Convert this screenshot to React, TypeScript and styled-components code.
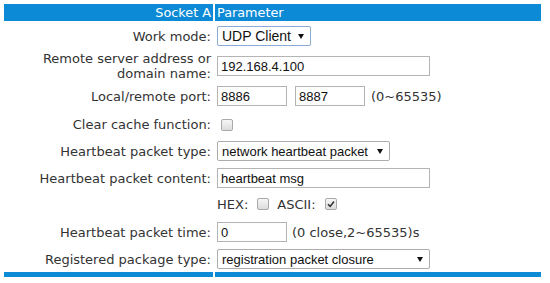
import React from 'react';
import styled, { createGlobalStyle } from 'styled-components';

const GlobalStyle = createGlobalStyle`
  body {
    margin: 0;
    background: #ffffff;
  }
`;

const Table = styled.div`
  margin: 4px 0 0 4px;
  width: 537px;
  display: flex;
  flex-direction: column;
  font-family: 'DejaVu Sans', Verdana, sans-serif;
`;

const Row = styled.div<{ $h: number }>`
  display: grid;
  grid-template-columns: 209px 1fr;
  column-gap: 2px;
  height: ${(p) => p.$h}px;
`;

const HeadCell = styled.div<{ $align: 'left' | 'right' }>`
  background: #0d8ad6;
  color: #ffffff;
  font-size: 12.8px;
  line-height: 17px;
  padding: 0 2px;
  text-align: ${(p) => p.$align};
  white-space: nowrap;
`;

const Bar = styled.div`
  background: #0d8ad6;
`;

const Label = styled.div`
  display: flex;
  align-items: center;
  justify-content: flex-end;
  text-align: right;
  padding-right: 2px;
  color: #333333;
  font-size: 13px;
  line-height: 15px;
  white-space: nowrap;
`;

const Value = styled.div`
  display: flex;
  align-items: center;
  padding-left: 2px;
  color: #333333;
  font-size: 13px;
`;

const TextInput = styled.input<{ $w: number; $left?: number }>`
  box-sizing: border-box;
  width: ${(p) => p.$w}px;
  height: 20px;
  margin: 0 0 0 ${(p) => p.$left ?? 0}px;
  padding: 0 3px;
  border: 1px solid #b4b4b4;
  border-radius: 0;
  font-family: 'Liberation Sans', Arial, sans-serif;
  font-size: 13px;
  color: #111111;
  background: #ffffff;
  outline: none;
`;

const Select = styled.div<{ $w: number; $focus?: boolean; $size?: number }>`
  box-sizing: border-box;
  width: ${(p) => p.$w}px;
  height: 20px;
  display: flex;
  align-items: center;
  justify-content: space-between;
  padding: 0 6px 0 4px;
  border: 1px solid ${(p) => (p.$focus ? '#8aa9d4' : '#acacac')};
  border-radius: 2px;
  background: #ffffff;
  font-family: 'Liberation Sans', Arial, sans-serif;
  font-size: ${(p) => p.$size ?? 13}px;
  color: #111111;
  white-space: nowrap;
`;

const Arrow = () => (
  <svg width="6" height="5" viewBox="0 0 6 5">
    <polygon points="0,0 6,0 3,5" fill="#111111" />
  </svg>
);

const Check = styled.span<{ $left?: number }>`
  box-sizing: border-box;
  width: 12px;
  height: 12px;
  margin-left: ${(p) => p.$left ?? 0}px;
  border: 1px solid #a9a9a9;
  border-radius: 2px;
  background: linear-gradient(#f6f6f6, #dcdcdc);
  display: inline-flex;
  align-items: center;
  justify-content: center;
`;

const Note = styled.span<{ $left?: number }>`
  margin-left: ${(p) => p.$left ?? 0}px;
  font-family: 'DejaVu Sans', Verdana, sans-serif;
  font-size: 13px;
  color: #333333;
  white-space: nowrap;
`;

const App: React.FC = () => {
  return (
    <>
      <GlobalStyle />
      <Table>
        <Row $h={17}>
          <HeadCell $align="right">Socket A</HeadCell>
          <HeadCell $align="left">Parameter</HeadCell>
        </Row>
        <Row $h={30}>
          <Label>Work mode:</Label>
          <Value>
            <Select $w={94} $focus $size={14}>
              UDP Client
              <Arrow />
            </Select>
          </Value>
        </Row>
        <Row $h={30}>
          <Label>
            Remote server address or
            <br />
            domain name:
          </Label>
          <Value>
            <TextInput $w={213} defaultValue="192.168.4.100" />
          </Value>
        </Row>
        <Row $h={30}>
          <Label>Local/remote port:</Label>
          <Value>
            <TextInput $w={70} defaultValue="8886" />
            <TextInput $w={70} $left={8} defaultValue="8887" />
            <Note $left={6}>(0~65535)</Note>
          </Value>
        </Row>
        <Row $h={27}>
          <Label>Clear cache function:</Label>
          <Value>
            <Check $left={4} />
          </Value>
        </Row>
        <Row $h={26}>
          <Label>Heartbeat packet type:</Label>
          <Value>
            <Select $w={173}>
              network heartbeat packet
              <Arrow />
            </Select>
          </Value>
        </Row>
        <Row $h={28}>
          <Label>Heartbeat packet content:</Label>
          <Value>
            <TextInput $w={213} defaultValue="heartbeat msg" />
          </Value>
        </Row>
        <Row $h={24}>
          <Label />
          <Value>
            <Note>HEX:</Note>
            <Check $left={9} />
            <Note $left={8}>ASCII:</Note>
            <Check $left={9}>
              <svg width="8" height="8" viewBox="0 0 8 8">
                <path d="M1 4.2 L3.2 6.4 L7 1.6" stroke="#333" strokeWidth="1.6" fill="none" />
              </svg>
            </Check>
          </Value>
        </Row>
        <Row $h={32}>
          <Label>Heartbeat packet time:</Label>
          <Value>
            <TextInput $w={70} defaultValue="0" />
            <Note $left={5}>(0 close,2~65535)s</Note>
          </Value>
        </Row>
        <Row $h={22}>
          <Label>Registered package type:</Label>
          <Value>
            <Select $w={213}>
              registration packet closure
              <Arrow />
            </Select>
          </Value>
        </Row>
        <Row $h={5} style={{ marginTop: 2 }}>
          <Bar />
          <Bar />
        </Row>
      </Table>
    </>
  );
};

export default App;
